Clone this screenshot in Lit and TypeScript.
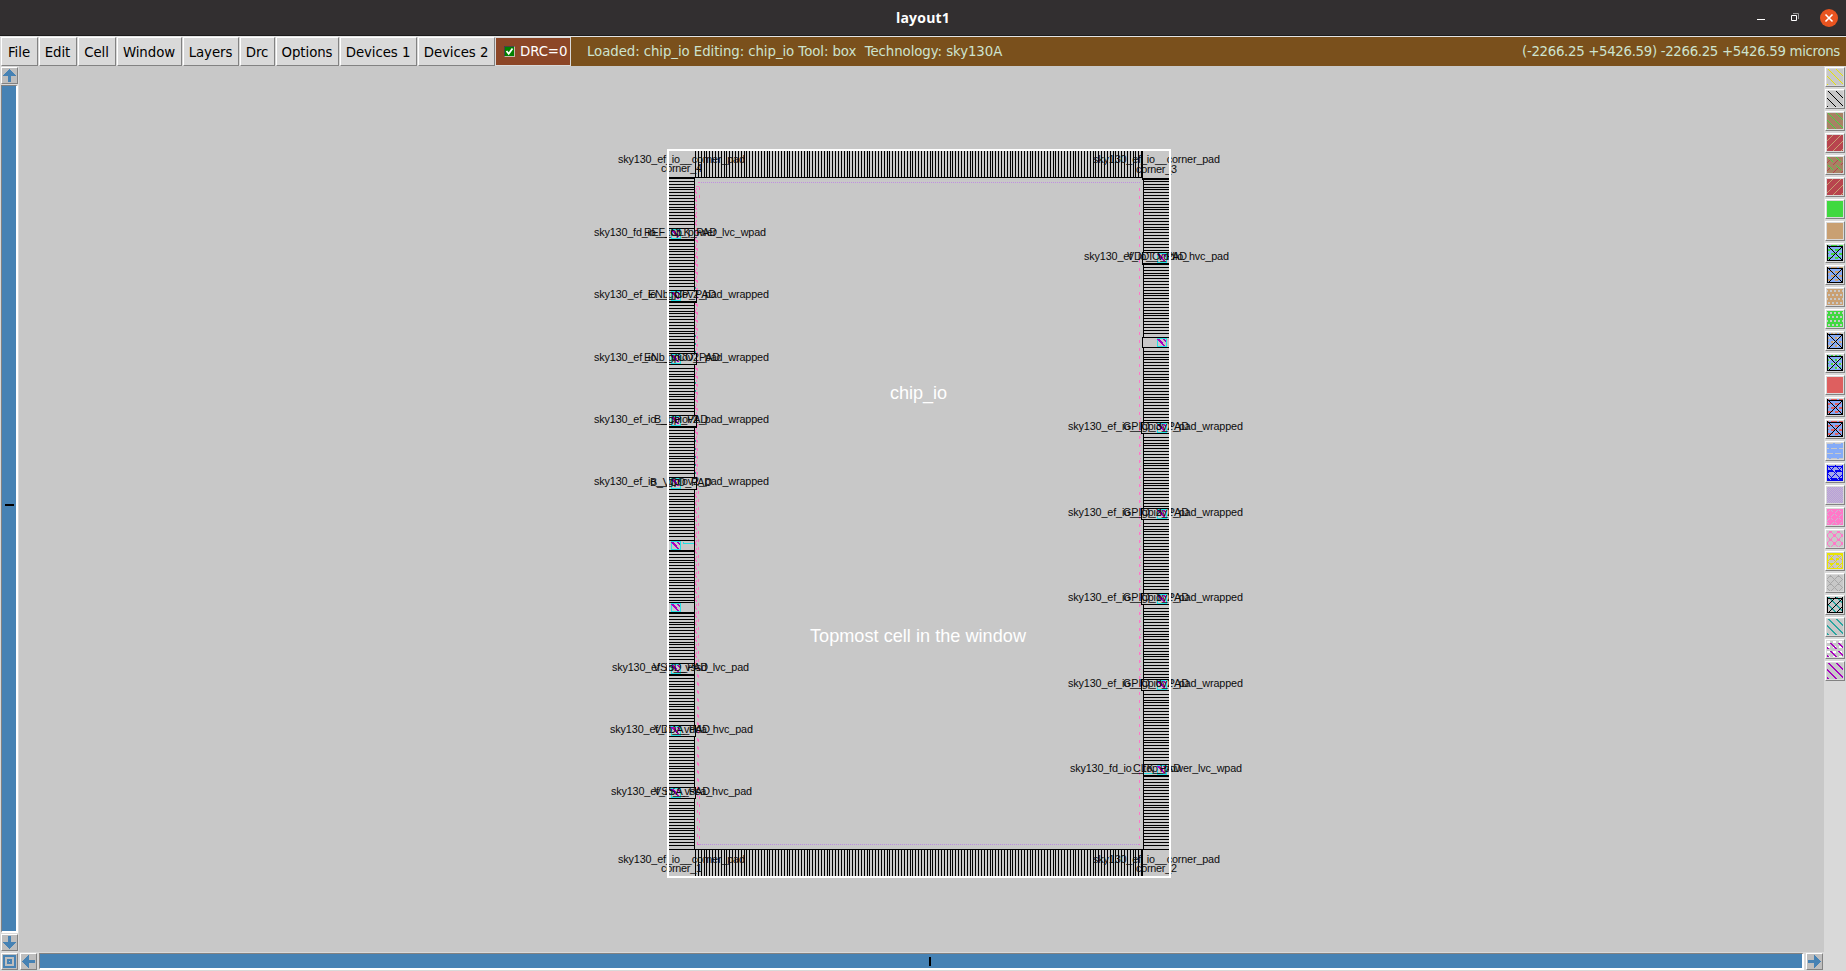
import { LitElement, html, svg, css } from "lit";
import { customElement } from "lit/decorators.js";

const GREY = "#c8c8c8", GREEN = "#40d940", TAN = "#c9a072", BROWN = "#a88264", RED = "#b8444e";
const SKY = "#85abf7", YELLOW = "#e8e400", PINK = "#ff78c8", TEAL = "#2aa5a0", VIOLET = "#a800c0";
const CORAL = "#de5f5f", BLUE = "#0000f0", LILAC = "#b8a0d8", STEEL = "#a8a8a8";

type Fill = (x: number, y: number) => string;
const mod = (n: number, m: number) => ((n % m) + m) % m;
const solid = (c: string): Fill => () => c;
const down = (bg: string, fg: string, w = 1): Fill => (x, y) => (mod(x - y - 1, 8) < w ? fg : bg);
const up = (bg: string, fg: string): Fill => (x, y) => (mod(x + y - 5, 8) < 1 ? fg : bg);
const boxed = (f: Fill): Fill => (x, y) =>
  (y === 1 && x > 0 && x < 15) || y === 15 || ((x === 0 || x === 15) && y > 0) || x === y || x === 16 - y ? "#000" : f(x, y);
const dashes = (bg: string, fg: string): Fill => (x, y) =>
  (mod(y, 4) === 0 && mod(x + (y % 8 ? 0 : 4), 8) < 6) || (mod(y, 4) === 1 && mod(x + (y % 8 > 3 ? 0 : 4), 8) < 3) ? fg : bg;
const holes = (bg: string, fg: string): Fill => (x, y) =>
  mod(y - 1, 4) < 2 && mod(x - (mod(y - 1, 8) < 4 ? 3 : 1), 4) < 2 ? fg : bg;
const lattice = (bg: string, fg: string): Fill => (x, y) =>
  mod(x + y - 3, 8) === 0 || mod(x - y - 3, 8) === 0 || (mod(x, 8) === 3 && mod(y, 8) < 2) ? fg : bg;
const rings = (bg: string, fg: string): Fill => (x, y) =>
  mod(x + y - 3, 8) === 0 || mod(x - y - 3, 8) === 0 || (mod(y - 4, 8) === 0 && mod(x - 6, 8) < 3) || (mod(x - 3, 8) < 1 && mod(y, 8) < 2) || (mod(y, 8) === 0 && mod(x - 2, 8) < 3) || (mod(x - 7, 8) === 0 && mod(y - 3, 8) < 3) ? fg : bg;

const LAYERS: Fill[] = [
  down(GREY, YELLOW),
  down(GREY, "#000"),
  down(BROWN, GREEN),
  up(RED, TAN),
  (x, y) => (mod(x - y - 1, 8) === 0 && mod(y, 8) < 5 ? GREEN : mod(x + y - 5, 8) === 0 && mod(y, 8) > 2 ? RED : BROWN),
  up(RED, TAN),
  solid(GREEN),
  solid(TAN),
  boxed(dashes(SKY, GREEN)),
  boxed(dashes(SKY, TAN)),
  holes(TAN, GREY),
  holes(GREEN, GREY),
  boxed((x, y) => (dashes(SKY, TAN)(x, y) === TAN ? (mod(x, 4) < 2 ? TAN : GREY) : SKY)),
  boxed((x, y) => (dashes(SKY, GREEN)(x, y) === GREEN ? (mod(x, 4) < 2 ? GREEN : GREY) : SKY)),
  solid(CORAL),
  boxed(dashes(SKY, CORAL)),
  boxed(dashes(SKY, CORAL)),
  (x, y) => (mod(y, 5) === 0 && mod(x + (y % 2) * 4, 8) < 6 ? GREY : SKY),
  (x, y) =>
    y === 1 || y === 15 || x === 0 || x === 15 || (mod(y - 5, 8) < 2 && mod(x + (y > 8 ? 4 : 0), 8) < 6) || mod(x - y, 8) === 0 || mod(x + y, 8) === 0 ? BLUE : "#a4a8e8",
  (x, y) => ((x + y) % 2 ? LILAC : "#c4b4d4"),
  (x, y) => ((mod(x + y - 3, 8) === 0 && mod(x, 4) < 3) || (mod(x - y - 3, 8) === 0 && mod(x, 4) < 2) ? "#c9b8d0" : PINK),
  rings(GREY, PINK),
  (x, y) =>
    y === 0 || y === 15 || x === 0 || x === 15 || y === 1 || (mod(x - 3, 6) < 3 && mod(y - 5, 5) < 2) || mod(x + y, 8) === 0 ? YELLOW : mod(x - y, 8) === 0 ? "#e0a080" : GREY,
  lattice(GREY, STEEL),
  (x, y) =>
    y === 1 || y === 15 || x === 0 || x === 15 || x === 16 - y || x === 8 - y || x === 24 - y ? "#000" : mod(x - y - 1, 8) < 2 ? TEAL : GREY,
  down(GREY, TEAL, 2),
  (x, y) => (mod(x - y - 1, 8) < 2 && mod(y, 8) > 1 ? VIOLET : mod(x, 6) < 3 && mod(y, 5) < 2 ? "#fff" : GREY),
  down(GREY, VIOLET, 2),
];

const swatch = (f: Fill) => {
  const paths = new Map<string, string>();
  for (let y = 0; y < 16; y++)
    for (let x = 0; x < 16; x++) {
      const c = f(x, y);
      paths.set(c, (paths.get(c) ?? "") + `M${x} ${y}h1v1h-1z`);
    }
  return html`<svg width="16" height="16" shape-rendering="crispEdges">
    ${[...paths].map(([c, d]) => svg`<path d=${d} fill=${c} />`)}
  </svg>`;
};

interface Pad { y0: number; y1: number; edge: number; thick?: boolean }
const LEFT: Pad[] = [
  { y0: 228, y1: 239, edge: 694, thick: true }, { y0: 290, y1: 301, edge: 696, thick: true },
  { y0: 353, y1: 364, edge: 696 }, { y0: 415, y1: 426, edge: 696, thick: true },
  { y0: 477, y1: 489, edge: 696 }, { y0: 540, y1: 550, edge: 694, thick: true },
  { y0: 602, y1: 612, edge: 694, thick: true }, { y0: 663, y1: 674, edge: 694, thick: true },
  { y0: 725, y1: 736, edge: 695 }, { y0: 787, y1: 798, edge: 695 },
];
const RIGHT: Pad[] = [
  { y0: 252, y1: 263, edge: 1142, thick: true }, { y0: 337, y1: 347, edge: 1142 },
  { y0: 422, y1: 433, edge: 1141 }, { y0: 508, y1: 519, edge: 1141 },
  { y0: 593, y1: 604, edge: 1141 }, { y0: 679, y1: 690, edge: 1141 },
  { y0: 764, y1: 775, edge: 1143, thick: true },
];

/* text, left x, right x, baseline */
type Label = [string, number, number, number];
const GPIO = "sky130_ef_io__gpiov2_pad_wrapped", POWER = "sky130_fd_io__top_power_lvc_wpad", CORNER = "sky130_ef_io__corner_pad";
const LABELS: Label[] = [
  [CORNER, 618, 745, 163], ["corner_4", 661, 702, 172],
  [CORNER, 1093, 1220, 163], ["corner_3", 1136, 1177, 173],
  [CORNER, 618, 745, 863], ["corner_1", 661, 702, 872],
  [CORNER, 1093, 1220, 863], ["corner_2", 1136, 1177, 872],
  [POWER, 594, 766, 236], ["REF_CLK_PAD", 644, 717, 236],
  [GPIO, 594, 769, 298], ["ENb_CP_PAD", 648, 716, 298],
  [GPIO, 594, 769, 361], ["ENb_VCO_PAD", 644, 720, 361],
  [GPIO, 594, 769, 423], ["B_CP_PAD", 654, 708, 423],
  [GPIO, 594, 769, 485], ["B_VCO_PAD", 650, 712, 486],
  ["sky130_ef_io__vssd_lvc_pad", 612, 749, 671], ["VSSD_PAD", 653, 708, 671],
  ["sky130_ef_io__vdda_hvc_pad", 610, 753, 733], ["VDDA_PAD", 654, 710, 733],
  ["sky130_ef_io__vssa_hvc_pad", 611, 752, 795], ["VSSA_PAD", 654, 710, 795],
  ["sky130_ef_io__vddio_hvc_pad", 1084, 1229, 260], ["VDDIO_PAD", 1127, 1187, 260],
  [GPIO, 1068, 1243, 430], ["GPIO_3_PAD", 1123, 1189, 430],
  [GPIO, 1068, 1243, 516], ["GPIO_2_PAD", 1123, 1189, 516],
  [GPIO, 1068, 1243, 601], ["GPIO_1_PAD", 1123, 1189, 601],
  [GPIO, 1068, 1243, 687], ["GPIO_0_PAD", 1123, 1189, 687],
  [POWER, 1070, 1242, 772], ["CLK_PAD", 1133, 1181, 772],
];

const PITCH = 2.86;
const hatchRows = (x0: number, x1: number, from: number, to: number) => {
  let d = "";
  for (let i = 1; ; i++) {
    const y = from + Math.round(i * PITCH);
    if (y >= to - 1) return d;
    d += `M${x0} ${y}h${x1 - x0}v1h${x0 - x1}z`;
  }
};
const column = (x0: number, x1: number, pads: Pad[]) => {
  let d = "", from = 178;
  for (const p of [...pads, { y0: 849, y1: 849, edge: 0 }]) {
    d += hatchRows(x0, x1, from, p.y0);
    from = p.y1 + 1;
  }
  return d;
};
const hatchCols = (y0: number, h: number) => {
  let d = "";
  for (let i = 0; i < 161; i++) {
    const x = 695 + Math.round(i * PITCH);
    if (x < 1142) d += `M${x} ${y0}h1v${h}h-1z`;
  }
  return d;
};

@customElement("layout-canvas")
export class LayoutCanvas extends LitElement {
  static styles = css`
    :host { display: block; flex: 1; min-width: 0; background: #c8c8c8; overflow: hidden; }
    svg { display: block; }
    .name { font: 10.8px "Liberation Sans", Arial, sans-serif; fill: #0c0c0c; }
    .big { font: 18.1px "Liberation Sans", Arial, sans-serif; fill: #fff; }
  `;
  private pad(p: Pad, left: boolean) {
    const x = left ? 669 : p.edge, w = left ? p.edge - 669 + 1 : 1169 - p.edge;
    const bx = left ? 671 : 1157, h = p.y1 - p.y0 - 2;
    return svg`
      <rect x=${x} y=${p.y0} width=${w} height=${p.y1 - p.y0} fill="#c8c8c8" />
      <path fill="#000" d="M${x} ${p.y0}h${w}v1h${-w}z M${x} ${p.y1}h${w}v${p.thick ? 2 : 1}h${-w}z M${p.edge} ${p.y0}h1v${p.y1 - p.y0}h-1z" />
      <rect x=${bx + 0.5} y=${p.y0 + 1.5} width="9" height=${h} fill="none" stroke="#25e0e4" />
      <path d="M${bx + 1} ${p.y0 + 2}l6.500 7M${bx + 6.5} ${p.y0 + 2}l2.500 2.500" stroke="#a800c0" stroke-width="1.900" />`;
  }
  render() {
    return html`<svg width="1805" height="886" viewBox="19 66 1805 886" shape-rendering="crispEdges">
      <path fill="#000" d=${hatchCols(151, 26) + hatchCols(849, 27) + column(669, 695, LEFT) + column(1143, 1169, RIGHT)} />
      <path fill="#000" d="M669 177h474v1h-474z M669 178h26v1h-26z M1142 178h27v2h-27z M669 849h500v1h-500z M694 178h1v671h-1z M1143 178h1v671h-1z M1142 151h1v27h-1z M1142 849h1v27h-1z" />
      <path d="M699 182.5H1140M698 844.5H1140" stroke="#bf8fe0" stroke-dasharray="1 1" />
      <g stroke="#ff78c8" fill="none">
        <path d="M698 182.5h2M696 186.5h3M699.5 187v12" stroke-dasharray="3 5" />
        <path d="M695.5 190V664" stroke-dasharray="3 5" />
        <path d="M696.5 188V664" stroke-dasharray="2 2" />
        <path d="M697.5 240V490" stroke-dasharray="3 5" />
        <path d="M698.5 491V664" stroke-dasharray="3 5" />
        <path d="M697.5 666V845" stroke-dasharray="3 5" />
        <path d="M698.5 667V790" stroke-dasharray="3 5" />
        <path d="M699.5 796V845" stroke-dasharray="3 5" />
        <path d="M1139.5 188V845" stroke-dasharray="3 5" />
        <path d="M1140.5 418V690" stroke-dasharray="1 2 1 4" />
      </g>
      <path d="M695.5 287v2M695.5 335v18M695.5 382v12M695.5 440v38" stroke="#2aa5a0" stroke-dasharray="2 6" />
      ${LEFT.map((p) => this.pad(p, true))}
      ${RIGHT.map((p) => this.pad(p, false))}
      <path d="M683.5 542v1.5h10M1144 773.5h12" stroke="#25e0e4" fill="none" />
      ${LABELS.map(([t, a, b, y]) => svg`<text class="name" x=${a} y=${y} textLength=${b - a}>${t}</text>`)}
      <rect x="668" y="150" width="502" height="727" fill="none" stroke="#fff" stroke-width="2" />
      <text class="big" x="890" y="399" textLength="57">chip_io</text>
      <text class="big" x="810" y="642" textLength="216">Topmost cell in the window</text>
    </svg>`;
  }
}

const ARROW = "M7 1h1v1h1v1h1v1h1v1h1v1h1v1h1v1H9v6H6V8H1V7h1V6h1V5h1V4h1V3h1V2h1z";

@customElement("app-root")
export class AppRoot extends LitElement {
  static styles = css`
    :host { display: flex; flex-direction: column; width: 100vw; height: 100vh; overflow: hidden; background: #d9d9d9;
      font: 13.33px "DejaVu Sans", sans-serif; color: #000; box-sizing: border-box; }
    .title { flex: none; height: 36px; box-sizing: border-box; background: #322f30; border-bottom: 1px solid #1c1b1b; display: grid;
      grid-template-columns: 1fr auto 1fr; align-items: center; color: #fff; }
    .title b { grid-column: 2; font: bold 14px "Open Sans", "Noto Sans", sans-serif; letter-spacing: .2px; }
    .controls { display: flex; justify-content: flex-end; }
    .bar { flex: none; height: 30px; box-sizing: border-box; display: flex; border-top: 1px solid #e4e4e4; background: #7a501c; }
    .menus { display: flex; background: #d9d9d9; }
    .menu { box-sizing: border-box; margin: 0 0 0 1px; padding-right: 1px; border: 1px solid; border-color: #fff #828282 #828282 #fff; line-height: 29px;
      text-align: center; white-space: nowrap; letter-spacing: -.07px; }
    .drc { width: 76px; box-sizing: border-box; border: 1px solid #d9d9d9; background: #8c4627; color: #fff; display: flex; align-items: center;
      padding-left: 8px; gap: 5px; letter-spacing: -.1px; }
    .status { flex: 1; display: flex; justify-content: space-between; align-items: center; color: #cde3cf; padding: 0 6px 0 16px; white-space: pre; }
    .message { letter-spacing: -.078px; }
    .coords { letter-spacing: -.325px; }
    .body { flex: 1; display: flex; min-height: 0; }
    .vscroll { width: 19px; display: flex; flex-direction: column; align-items: flex-start; padding: 1px 0 1px 1px; box-sizing: border-box; gap: 1px; }
    .btn { width: 17px; height: 17px; box-sizing: border-box; flex: none; border: 1px solid; border-color: #fff #828282 #828282 #fff; background: #bebebe; }
    .btn svg { display: block; }
    .trough { background: #4682b4; border: 1px solid; border-color: #828282 #fff #fff #828282; box-sizing: border-box; flex: 1; display: flex; align-items: center; justify-content: center; }
    .vscroll .trough { width: 17px; border-right-width: 2px; border-bottom-width: 2px; }
    .vtick { width: 9px; height: 2px; background: #000; margin-bottom: 7px; }
    .foot { flex: none; height: 19px; display: flex; gap: 2px; padding: 1px 23px 0 1px; box-sizing: border-box; align-items: flex-start; }
    .foot .trough { height: 17px; border-bottom-width: 2px; border-right-width: 2px; }
    .htick { width: 2px; height: 9px; background: #000; margin-left: 17px; }
    .main { flex: 1; min-width: 0; display: flex; flex-direction: column; }
    .row { flex: 1; min-height: 0; display: flex; }
    .palette { width: 22px; flex: none; padding: 1px 0 0 1px; box-sizing: border-box; display: flex; flex-direction: column; gap: 2px; }
    .chip { width: 20px; height: 20px; box-sizing: border-box; padding: 1px; border: 1px solid; border-color: #fff #828282 #828282 #fff; }
    .chip svg { display: block; }
  `;
  private menus: [string, number][] = [["File", 37], ["Edit", 38], ["Cell", 38], ["Window", 65], ["Layers", 56], ["Drc", 35], ["Options", 63], ["Devices 1", 77], ["Devices 2", 77]];
  private arrow(angle: number) {
    return html`<div class="btn"><svg width="15" height="15"><path d=${ARROW} fill="#4682b4" transform="rotate(${angle} 7.5 7.5)" shape-rendering="crispEdges" /></svg></div>`;
  }
  render() {
    return html`
      <div class="title">
        <b>layout1</b>
        <div class="controls"><svg width="100" height="34">
          <path d="M11 18h8v1h-8z" fill="#fff" />
          <path d="M45.500 14.500h5v5h-5z" fill="none" stroke="#fff" />
          <path d="M47 12.500h5.500v5.500" fill="none" stroke="#999" />
          <circle cx="83" cy="17" r="9" fill="#e95420" />
          <path d="M79.500 13.500l7 7m0-7l-7 7" stroke="#fff" stroke-width="1.600" />
        </svg></div>
      </div>
      <div class="bar">
        <div class="menus">${this.menus.map(([m, w]) => html`<div class="menu" style="width:${w}px">${m}</div>`)}</div>
        <div class="drc">
          <svg width="11" height="11"><rect width="11" height="11" fill="#c8b8a8" /><path d="M0 11V0H11L10 1V10H1z" fill="#444" /><rect x="1" y="1" width="9" height="9" fill="#008000" /><path d="M2.500 5l2.200 2.700L8.500 2.500" fill="none" stroke="#fff" stroke-width="1.800" /></svg>
          <span>DRC=0</span>
        </div>
        <div class="status"><span class="message">Loaded: chip_io Editing: chip_io Tool: box  Technology: sky130A</span><span class="coords">(-2266.25 +5426.59) -2266.25 +5426.59 microns</span></div>
      </div>
      <div class="body">
        <div class="main">
          <div class="row">
            <div class="vscroll">${this.arrow(0)}<div class="trough"><div class="vtick"></div></div>${this.arrow(180)}</div>
            <layout-canvas></layout-canvas>
            <div class="palette">${LAYERS.map((f) => html`<div class="chip">${swatch(f)}</div>`)}</div>
          </div>
          <div class="foot">
            <div class="btn"><svg width="15" height="15" shape-rendering="crispEdges"><path d="M1 1h13v13H1z" fill="#4682b4" /><path d="M3 3h9v9H3z" fill="#bebebe" /><path d="M5 5h5v5H5z" fill="#4682b4" /><path d="M7 7h1v1H7z" fill="#bebebe" /></svg></div>
            ${this.arrow(270)}
            <div class="trough"><div class="htick"></div></div>
            ${this.arrow(90)}
          </div>
        </div>
      </div>`;
  }
}
